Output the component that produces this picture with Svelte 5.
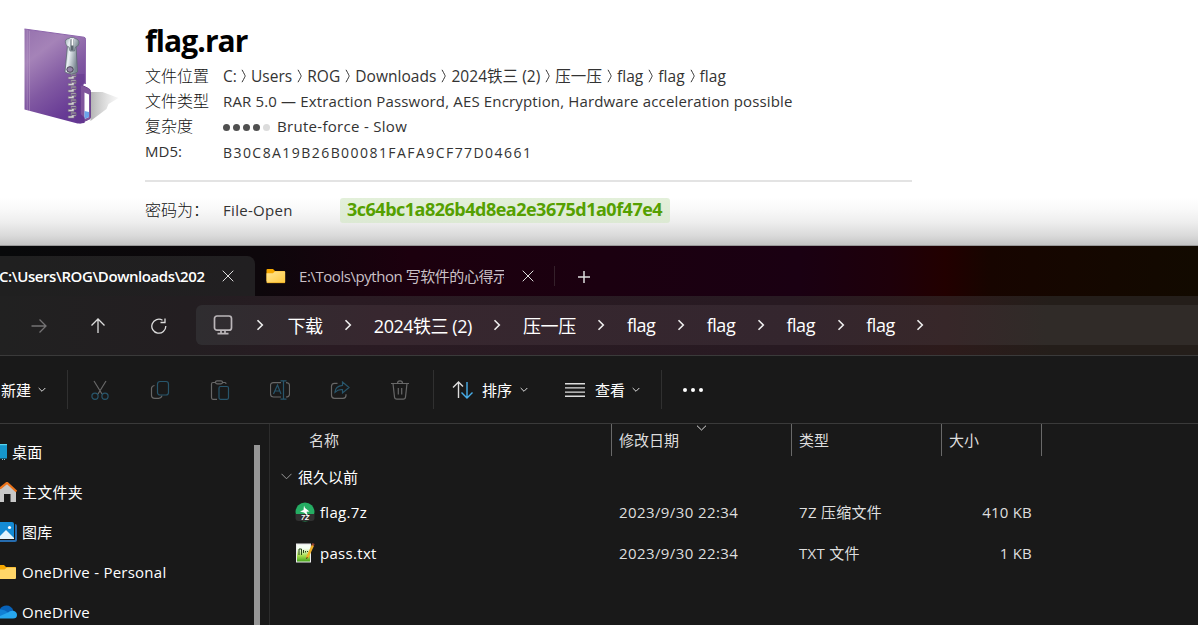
<script>
  const path = ['C:', 'Users', 'ROG', 'Downloads', '2024铁三 (2)', '压一压', 'flag', 'flag', 'flag'];
  const crumbs = ['下载', '2024铁三 (2)', '压一压', 'flag', 'flag', 'flag', 'flag'];
  const teeth = [69, 75.5, 82, 88.5, 95, 101.5, 108];
  const files = [
    { name: 'flag.7z', kind: '7z', date: '2023/9/30 22:34', type: '7Z 压缩文件', size: '410 KB' },
    { name: 'pass.txt', kind: 'txt', date: '2023/9/30 22:34', type: 'TXT 文件', size: '1 KB' }
  ];
  const places = [
    { icon: 'desktop', label: '桌面' },
    { icon: 'home', label: '主文件夹' },
    { icon: 'gallery', label: '图库' },
    { icon: 'folder', label: 'OneDrive - Personal' },
    { icon: 'cloud', label: 'OneDrive' }
  ];
</script>

{#snippet folder()}
  <svg class="folder" width="20" height="16" viewBox="0 0 20 16">
    <defs><linearGradient id="fold" x1="0" y1="0" x2="1" y2="1"><stop offset="0" stop-color="#ffe596" /><stop offset="1" stop-color="#ffc83c" /></linearGradient></defs>
    <path d="M.5 2Q.5 1 1.5 1H7l2 2h9q1 0 1 1v9H.5z" fill="#f5a700" />
    <path d="M.5 5.3H7L9 3.2h9.4q.8 0 .8.8v10q0 1-.8 1H1.300q-.8 0-.8-1z" fill="url(#fold)" />
    <path d="M1 14.700H18.800" stroke="#e9a820" stroke-width=".7" />
  </svg>
{/snippet}

{#snippet close()}
  <svg class="close" width="12" height="12" viewBox="0 0 12 12"><path d="M.7.7l10.600 10.600M11.300.7L.7 11.300" /></svg>
{/snippet}

{#snippet chevron()}
  <svg class="chev" width="8" height="12" viewBox="0 0 8 12"><path d="M1.500 1.200L6.300 6 1.500 10.800" /></svg>
{/snippet}

{#snippet down()}
  <svg class="down" width="8" height="6" viewBox="0 0 8 6"><path d="M.7 1L4 4.300 7.300 1" /></svg>
{/snippet}

<main>
  <section class="report">
    <svg class="archive" width="120" height="120" viewBox="0.5 10 120 120">
      <defs>
        <linearGradient id="cover" x1="0" y1="0" x2=".5" y2="1">
          <stop offset="0" stop-color="#9672ae" /><stop offset=".3" stop-color="#a583b8" /><stop offset=".65" stop-color="#8159a2" /><stop offset="1" stop-color="#663994" />
        </linearGradient>
        <linearGradient id="shade" x1="0" y1="0" x2="1" y2="0"><stop offset="0" stop-color="#b4b4b4" /><stop offset="1" stop-color="#f2f2f2" stop-opacity=".6" /></linearGradient>
        <linearGradient id="metal" x1="0" y1="0" x2="1" y2=".4"><stop offset="0" stop-color="#9aa6b0" /><stop offset=".4" stop-color="#e9eff3" /><stop offset="1" stop-color="#7b8892" /></linearGradient>
      </defs>
      <path d="M91 92L103 92 119 98 109 104 107 109 91 121z" fill="url(#shade)" />
      <path d="M81 84.500L89 88.500q2 1 2 3V117q0 2-2 2.500L81 123z" fill="#80559c" stroke="#6d438f" />
      <path d="M85 92.500L89.500 94.500V117L85 119z" fill="#fff" />
      <path d="M85 111l4.500 1v5l-4.500 2z" fill="#6ba4ea" />
      <path d="M25 29L84.500 37.200q1.500.3 1.500 2V83L81 87V114l4 4v5L78 123.500 25 109.500z" fill="url(#cover)" />
      <path d="M25 29L84.500 37.200q1.500.3 1.500 2V84" fill="none" stroke="#8d65ac" />
      <path d="M27.700 30V110M30 31V111" stroke="#bda0ca" stroke-width=".8" opacity=".6" />
      <path d="M76 74V121L80 124l5-1.500V117l-4-3V86l4-4V74z" fill="#60338a" opacity=".4" />
      {#each teeth as y}
        <path d="M68.700 {y + 8}h3.300v-2.500h4.500v2.500h-2v2h-5.800zM71.500 {y + 4.500}v2.500h5v-2.500z" fill="#d4d0d6" stroke="#77707c" stroke-width=".6" />
      {/each}
      <path d="M68 45L76.500 45.500 78 72q-6 4-12.500 0z" fill="url(#metal)" stroke="#5d6872" stroke-width=".8" />
      <path d="M66 43q-1-4 3.500-4.500L71 37.500h3l1.500 1q4.500 1 4 5-.5 3-3.500 3.500l-1 4h-4.500l-1-4q-3-.5-3.500-4z" fill="url(#metal)" stroke="#5d6872" stroke-width=".7" />
      <path d="M71 39.500q2-1.500 3 0v11h-3z" fill="#5b666f" />
      <path d="M72 38.500h1.800v7H72z" fill="#fff" />
      <ellipse cx="70.500" cy="69.500" rx="3.200" ry="2.800" fill="#9484a8" stroke="#4b4658" />
    </svg>
    <div class="details">
      <h1>flag.rar</h1>
      <div class="row"><span class="label">文件位置</span><span class="path">{#each path as part, i}{#if i}<svg width="5" height="14" viewBox="0 0 5 14"><path d="M1 .8Q4.200 6.500 4.200 7T1 13.200" /></svg>{/if}<span>{part}</span>{/each}</span></div>
      <div class="row"><span class="label">文件类型</span><span class="type">RAR 5.0 — Extraction Password, AES Encryption, Hardware acceleration possible</span></div>
      <div class="row"><span class="label">复杂度</span><span class="dots"><i></i><i></i><i></i><i></i><i class="off"></i></span><span class="brute">Brute-force - Slow</span></div>
      <div class="row"><span class="label md">MD5:</span><span class="hash">B30C8A19B26B00081FAFA9CF77D04661</span></div>
      <div class="rule"></div>
      <div class="result"><span class="label">密码为：</span><span class="open">File-Open</span><strong>3c64bc1a826b4d8ea2e3675d1a0f47e4</strong></div>
    </div>
  </section>

  <section class="explorer">
    <div class="tabs">
      <div class="tab active"><span class="title">C:\Users\ROG\Downloads\202</span>{@render close()}</div>
      <div class="tab rest">{@render folder()}<span class="title">E:\Tools\python 写软件的心得示</span>{@render close()}</div>
      <svg class="plus" width="14" height="14" viewBox="0 0 14 14"><path d="M7 1v12M1 7h12" /></svg>
    </div>

    <div class="nav">
      <svg class="forward" width="16" height="16" viewBox="0 0 16 16"><path d="M.5 8H15M8.500 1.500L15 8l-6.500 6.500" /></svg>
      <svg class="up" width="16" height="16" viewBox="0 0 16 16"><path d="M8 15V1M1.500 7.500L8 1l6.500 6.500" /></svg>
      <svg class="reload" width="16" height="16" viewBox="0 0 16 16"><path d="M14.800 8A7 7 0 1 1 11.500 2.200M9.500 4.500H14V.5" /></svg>
      <div class="address">
        <svg class="pc" width="20" height="20" viewBox="0 0 20 20"><rect x="1.500" y="1" width="17" height="14.200" rx="2.500" /><path d="M8 15.500v3M12 15.500v3M4.500 18.700h11" /></svg>
        <span class="gap">{@render chevron()}</span>
        {#each crumbs as crumb}<span class="crumb">{crumb}</span><span class="gap">{@render chevron()}</span>{/each}
      </div>
    </div>

    <div class="commands">
      <span class="command new">新建{@render down()}</span>
      <div class="icons">
        <svg viewBox="0 0 20 20"><path d="M4 1l8 13M16 1L8 14" /><g class="blue"><circle cx="5" cy="16.300" r="3.100" /><circle cx="15" cy="16.300" r="3.100" /></g></svg>
        <svg viewBox="0 0 20 20"><path d="M4.500 5.500q-3 .5-3 3V15q0 3.300 3.300 3.300h4q2.500 0 3.200-2.600" /><rect class="blue" x="7.500" y="1.500" width="11" height="13.500" rx="2.500" /></svg>
        <svg viewBox="0 0 20 20"><path d="M6 2.500H3Q1.500 2.500 1.500 4v13.500q0 1.800 1.500 1.800h4M12 2.500h3q1 0 1 1.500" /><rect x="5.500" y=".8" width="7" height="3" rx="1.500" /><rect class="blue" x="9" y="6.500" width="9.500" height="12.800" rx="1.500" /></svg>
        <svg viewBox="0 0 20 20"><path d="M11 2.700H3.500q-3 0-3 3V14q0 3 3 3H11M16 2.700q3.500 0 3.500 3V14q0 3-3.500 3" /><path class="blue" d="M10.500.8h6M10.500 19.200h6M13.500.8v18.400M3.500 14l4-9 3.500 9M5 11h5" /></svg>
        <svg viewBox="0 0 20 20"><path d="M7.500 3.300H4.500q-3 0-3 3V15.300q0 3 3 3h8.500q3 0 3-3v-1" /><path class="blue" d="M12.500 2l6.500 5.500L12.500 13V9.700Q8 9.200 5 12.300 5.300 6 12.500 5.300z" /></svg>
        <svg viewBox="0 0 20 20"><path d="M1 3.500h18M3 3.500L4.500 17q.2 2.200 2.300 2.200h6.400q2.100 0 2.300-2.200L17 3.500M7.500 3.500Q7.500.8 10 .8t2.500 2.700M8.300 8v6.500M11.700 8v6.500" /></svg>
      </div>
      <span class="command sort"><svg width="22" height="18" viewBox="0 0 22 18"><path d="M6.500 17V1M1 6.500L6.500 1 11 5.500" /><path class="bright" d="M15 1v16M9.500 11.500L15 17l5.500-5.500" /></svg>排序{@render down()}</span>
      <span class="command view"><svg width="20" height="14" viewBox="0 0 20 14"><path d="M0 .7h20M0 4.900h20M0 9.100h20M0 13.300h20" /></svg>查看{@render down()}</span>
      <span class="more"><i></i><i></i><i></i></span>
    </div>

    <div class="body">
      <nav>
        {#each places as place}
          <div class="place {place.icon}">
            {#if place.icon === 'desktop'}
              <svg width="7" height="18" viewBox="0 0 7 18"><path d="M0 1h7v14.500H0z" fill="#1596cc" /><path d="M0 1h7v1.200H0z" fill="#56d4ed" /><path d="M2 16.500h1M4 16.500h1" stroke="#8ebfd0" /></svg>
            {:else if place.icon === 'home'}
              <svg width="17" height="20" viewBox="0 0 17 20"><path d="M0 7L7 1.500 16 9v11h-5.500v-8H4v8H0z" fill="#c8c8c8" /><path d="M0 6.500L7 .8 16.500 9.500" fill="none" stroke="#ed741b" stroke-width="2.200" /></svg>
            {:else if place.icon === 'gallery'}
              <svg width="17" height="20" viewBox="0 0 17 20"><path d="M0 2h15q2 0 2 2v14q0 2-2 2H0z" fill="#266cae" /><path d="M0 0h13q2 0 2 2v16H0z" fill="#191919" /><path d="M0 0h12q2 0 2 2v15H0z" fill="#148bd5" /><path d="M0 14l6-6 8 8v1H0z" fill="#e4f4fc" /><circle cx="9.500" cy="5.500" r="1.600" fill="#fff" /></svg>
            {:else if place.icon === 'folder'}
              <svg width="16" height="16" viewBox="4 0 16 16"><path d="M0 1h8l2 2h9q1 0 1 1v8H0z" fill="#f5a700" /><path d="M0 5.500h8.500L11 3.500h9V14q0 1-1 1H0z" fill="#ffd668" /></svg>
            {:else}
              <svg width="17" height="14" viewBox="0 0 17 14"><path d="M0 4Q2 .5 6.500.5q5 0 7 5.500L0 11z" fill="#0862b8" /><path d="M0 4.500Q4 4 8 7.500L4 13H0z" fill="#1180d4" /><path d="M0 11L8 7.500Q10 5.500 13 5.800 17 6.500 17 10q0 3.500-4 3.500H0z" fill="#27a7ee" /></svg>
            {/if}
            <span>{place.label}</span>
          </div>
        {/each}
      </nav>
      <div class="scroll"><div class="thumb"></div></div>
      <div class="list">
        <div class="head">
          <span>名称</span>
          <span>修改日期<svg class="mark" width="11" height="6" viewBox="0 0 11 6"><path d="M1 .7l4.500 4.300L10 .7" /></svg></span>
          <span>类型</span><span>大小</span>
        </div>
        <div class="group"><svg width="11" height="7" viewBox="0 0 11 7"><path d="M.5.8L5.500 5.800l5-5" /></svg>很久以前</div>
        {#each files as file}
          <div class="file">
            <span class="name">
              {#if file.kind === '7z'}
                <svg width="20" height="20" viewBox="0 0 20 20"><circle cx="10" cy="10" r="9.500" fill="#25ad63" /><path d="M.5 12h19v4q0 3-3 3h-13q-3 0-3-3z" fill="#303030" /><path d="M9 3.500l1 2.500 4.500 3.500-3 .3 1.500 4.200-4-3.500-4-1 3.500-1.500z" fill="#fff" /><text x="6" y="18.300">7Z</text></svg>
              {:else}
                <svg width="20" height="20" viewBox="0 0 20 20"><defs><linearGradient id="page" x1="0" y1="0" x2="0" y2="1"><stop offset=".2" stop-color="#f6fff4" /><stop offset=".65" stop-color="#a6dd50" /><stop offset="1" stop-color="#46a51b" /></linearGradient></defs><path d="M1 .5h15v19H1z" fill="#ececec" /><path d="M2 2h13v16.500H2z" fill="url(#page)" /><path d="M4 6v6M6.500 6v6M4 6h2.500M8.500 7v3M10.500 8v1.500M12.500 8v1" stroke="#294619" fill="none" /><path d="M18 2l-6 13" stroke="#edae25" stroke-width="2.500" /><path d="M18.500.5l-.8 2" stroke="#944034" stroke-width="2.300" /><path d="M12.300 14l-.8 2" stroke="#55421f" /></svg>
              {/if}
              <span>{file.name}</span>
            </span>
            <span class="date">{file.date}</span><span class="kind">{file.type}</span><span class="size">{file.size}</span>
          </div>
        {/each}
      </div>
    </div>
  </section>
</main>

<style>
  :global(body) { background: #fff; overflow: hidden; }
  main { width: 1198px; height: 625px; overflow: hidden; display: flex; flex-direction: column; font-family: "Open Sans", "Noto Sans CJK SC", sans-serif; font-size: 15px; white-space: nowrap; }
  svg { flex: none; display: block; }
  .close, .chev, .down, .plus, .nav svg, .commands svg, .mark, .group svg, .path svg { fill: none; stroke: #ddd; }

  .report { height: 246px; display: flex; box-sizing: border-box; padding-top: 10px; background: linear-gradient(#fff 0 198px, #fafafa 208px, #eee 222px, #d9d9d9 236px, #c4c4c4 245px, #999 245px); color: #333; }
  .archive { margin-right: 25px; }
  .details { width: 767px; }
  h1 { margin: 0; height: 53px; line-height: 61px; font-size: 30px; font-weight: 700; letter-spacing: -.9px; color: #000; }
  .row { display: flex; align-items: center; height: 25.3px; }
  .label { width: 78px; font-size: 16px; line-height: 24px; flex: none; font-weight: 300; color: #111; }
  .md { font-size: 15px; padding-bottom: 1px; font-weight: 400; color: #333; }
  .path { display: flex; align-items: center; gap: 5px; font-size: 15.500px; letter-spacing: .04px; }
  .path span:first-child { margin-right: -1px; }
  .path svg { stroke: #333; }
  .type { letter-spacing: .15px; }
  .brute { letter-spacing: .3px; }
  .hash { letter-spacing: 1.440px; font-size: 14px; padding-top: 1px; }
  .dots { display: flex; gap: 3px; width: 54px; padding-top: 2px; }
  .dots i { width: 7px; height: 7px; border-radius: 50%; background: #505050; }
  .dots .off { background: #dcdcdc; }
  .rule { height: 2px; margin-top: 16px; background: #e3e3e3; }
  .result { display: flex; align-items: center; height: 56px; }
  .open { width: 117px; letter-spacing: .3px; }
  strong { width: 330px; box-sizing: border-box; height: 25px; line-height: 23px; padding-left: 7px; border-radius: 3px; background: linear-gradient(#e3f0da, #dce9d3); color: #55a000; font-size: 18px; letter-spacing: -.5px; }

  .explorer { height: 379px; background: #191919; color: #fff; }
  .tabs { height: 50px; display: flex; align-items: center; background: linear-gradient(90deg, #08090a, #0d070b 260px, #1c000e 410px, #1a0012 800px, #1e000a 890px, #220000 945px, #170500 990px, #120a00); }
  .tab { display: flex; align-items: center; box-sizing: border-box; }
  .active { width: 255px; height: 40px; align-self: flex-end; background: linear-gradient(90deg, #202020, #211f21); border-radius: 0 8px 0 0; }
  .title { overflow: hidden; }
  .active .title { width: 222px; font-weight: 600; letter-spacing: -.42px; text-indent: -1px; }
  .rest { width: 300px; height: 20px; padding-left: 11px; margin-top: 10px; border-right: 1px solid #34202a; color: #cac0c6; }
  .rest .title { width: 205px; margin: 0 19px 0 13px; padding-bottom: 1px; letter-spacing: -.45px; }
  .rest .close { margin-left: -1px; }
  .plus { margin: 12px 0 0 22px; stroke-width: 1.500; }

  .nav { height: 59px; display: flex; align-items: center; padding-left: 31px; background: linear-gradient(90deg, #212121, #231e21 190px, #2a1b23 330px, #281a22 790px, #2d1b1b 950px, #241e1a 1050px); }
  .nav svg { stroke-width: 1.300; }
  .nav .forward { stroke: #747374; }
  .up { margin-left: 43px; }
  .reload { margin-left: 45px; }
  .address { height: 40px; flex: 1; display: flex; align-items: center; margin: 0 0 1px 29px; padding-left: 17px; border-radius: 6px 0 0 6px; background: linear-gradient(90deg, #2f2d30, #37272f 180px, #34262e 600px, #372729 750px, #302b28 850px); font-size: 18px; }
  .nav .pc { stroke: #bbb6b9; stroke-width: 1.700; }
  .gap { width: 51.300px; display: flex; justify-content: center; flex: none; }
  .pc + .gap { width: 54.500px; }
  .nav .chev { stroke: #eee; stroke-width: 1.600; }
  .crumb { letter-spacing: -.48px; padding-bottom: 1px; }

  .commands { height: 67px; display: flex; align-items: center; border-top: 1px solid #3a3a3a; border-bottom: 1px solid #3a3a3a; }
  .command { height: 39px; display: flex; align-items: center; gap: 8px; box-sizing: border-box; }
  .new, .sort, .view { border-right: 1px solid #303030; }
  .new { width: 68px; padding-left: 1px; gap: 7px; }
  .sort { border: 0; padding-left: 18px; width: 132px; border-left: 1px solid #303030; }
  .view { width: 97px; gap: 10px; }
  .view .down { margin-left: -3px; }
  .icons { display: flex; gap: 40px; width: 343px; padding-left: 22px; }
  .icons svg { width: 20px; height: 20px; stroke: #686868; stroke-width: 1.200; }
  .commands .blue { stroke: #28566c; }
  .sort svg:first-child, .view svg:first-child { stroke-width: 1.400; }
  .commands .bright { stroke: #48aeea; }
  .more { display: flex; gap: 4px; margin-left: 21px; }
  .more i { width: 4px; height: 4px; border-radius: 50%; background: #fff; }

  .body { display: flex; height: 201px; }
  nav { width: 246px; padding-top: 8px; }
  .place { height: 40px; display: flex; align-items: center; }
  .place span { margin-left: auto; width: calc(100% - 22px); padding-bottom: 2px; letter-spacing: .25px; }
  .place.folder span, .place.cloud span { padding-bottom: 0; }
  .place:first-child span { width: calc(100% - 12px); }
  .place svg { margin-right: -17px; }
  .scroll { width: 24px; padding: 21px 0 0 8px; box-sizing: border-box; border-right: 1px solid #2c2c2c; }
  .thumb { width: 6px; height: 180px; background: #969696; }
  .list { flex: 1; padding-left: 11px; }
  .head, .file { display: grid; grid-template-columns: 331px 180px 150px 100px; }
  .head { height: 32px; color: #ddd; line-height: 32px; }
  .head span { border-right: 1px solid #696969; padding-left: 7px; position: relative; }
  .head span:first-child { padding-left: 28px; }
  .mark { position: absolute; top: 1px; left: 84px; }
  .group { display: flex; align-items: center; gap: 6px; height: 35px; box-sizing: border-box; padding-top: 5px; }
  .group svg { stroke: #999; }
  .file { height: 41px; align-items: center; color: #dedede; }
  .file > span { padding-left: 7px; }
  .file .name { display: flex; align-items: center; gap: 5px; padding-left: 14px; color: #fff; letter-spacing: .3px; }
  .date { letter-spacing: .4px; }
  .kind { letter-spacing: .3px; }
  .file text { font: italic 700 7px "Liberation Sans", sans-serif; fill: #fff; letter-spacing: 0; }
  .file .size { text-align: right; padding-right: 10px; letter-spacing: .2px; }
</style>
